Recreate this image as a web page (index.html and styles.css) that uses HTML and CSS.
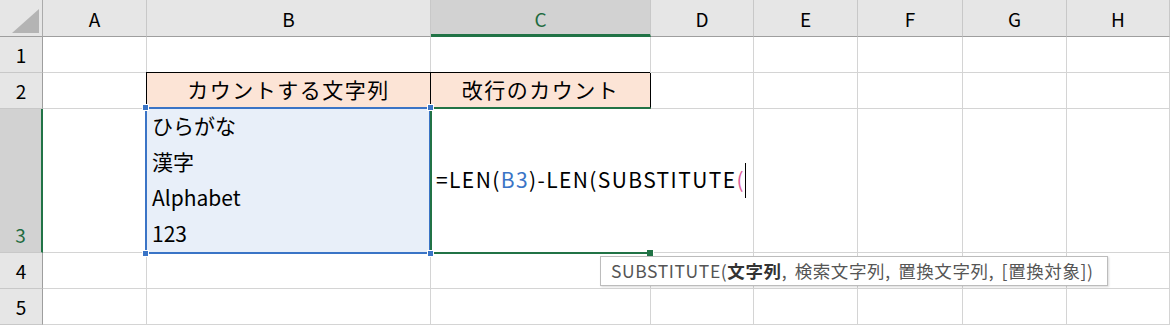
FILE: index.html
```html
<!DOCTYPE html>
<html lang="ja">
<head>
  <meta charset="UTF-8" />
  <title>改行のカウント</title>
  <link rel="stylesheet" href="styles.css">
</head>
<body>
  <div class="sheet">
    <!-- column headers -->
    <div class="corner">
      <svg width="42" height="36" viewBox="0 0 42 36">
        <polygon points="39,9 39,33 12,33" fill="#b4b4b4" />
      </svg>
    </div>
    <div class="col-head">A</div>
    <div class="col-head">B</div>
    <div class="col-head active">C</div>
    <div class="col-head">D</div>
    <div class="col-head">E</div>
    <div class="col-head">F</div>
    <div class="col-head">G</div>
    <div class="col-head">H</div>

    <!-- row 1 -->
    <div class="row-head">1</div>
    <div class="cell"></div>
    <div class="cell"></div>
    <div class="cell"></div>
    <div class="cell"></div>
    <div class="cell"></div>
    <div class="cell"></div>
    <div class="cell"></div>
    <div class="cell"></div>

    <!-- row 2 -->
    <div class="row-head">2</div>
    <div class="cell"></div>
    <div class="cell title">カウントする文字列</div>
    <div class="cell title">改行のカウント</div>
    <div class="cell"></div>
    <div class="cell"></div>
    <div class="cell"></div>
    <div class="cell"></div>
    <div class="cell"></div>

    <!-- row 3 -->
    <div class="row-head active">3</div>
    <div class="cell"></div>
    <div class="cell range">
      <div class="lines">
        <div>ひらがな</div>
        <div>漢字</div>
        <div>Alphabet</div>
        <div>123</div>
      </div>
      <span class="handle tl"></span>
      <span class="handle tr"></span>
      <span class="handle bl"></span>
      <span class="handle br"></span>
    </div>
    <div class="cell editing">
      <span class="formula">=LEN(<span class="ref">B3</span>)-LEN(SUBSTITUTE<span class="paren">(</span></span><span class="caret"></span>
      <span class="fill-handle"></span>
    </div>
    <div class="cell"></div>
    <div class="cell"></div>
    <div class="cell"></div>
    <div class="cell"></div>
    <div class="cell"></div>

    <!-- row 4 -->
    <div class="row-head">4</div>
    <div class="cell"></div>
    <div class="cell"></div>
    <div class="cell"></div>
    <div class="cell"></div>
    <div class="cell"></div>
    <div class="cell"></div>
    <div class="cell"></div>
    <div class="cell"></div>

    <!-- row 5 -->
    <div class="row-head">5</div>
    <div class="cell"></div>
    <div class="cell"></div>
    <div class="cell"></div>
    <div class="cell"></div>
    <div class="cell"></div>
    <div class="cell"></div>
    <div class="cell"></div>
    <div class="cell"></div>
  </div>

  <div class="tooltip">SUBSTITUTE(<b>文字列</b>, 検索文字列, 置換文字列, [置換対象])</div>
</body>
</html>
```

FILE: styles.css
```css
body {
  margin: 0;
  padding: 0;
  background: #fff;
  font-family: "Noto Sans CJK JP", "Noto Sans", sans-serif;
  color: #000;
  position: relative;
  overflow: hidden;
}

.sheet {
  display: grid;
  grid-template-columns: 43px 104px 284px 220px 103px 104px 105px 104px 103px;
  grid-template-rows: 37px 36px 36px 144px 36px 36px;
  width: 1170px;
  height: 325px;
}

.corner {
  background: #e6e6e6;
  border-right: 1px solid #ababab;
  border-bottom: 1px solid #9e9e9e;
}

.corner svg {
  display: block;
}

.col-head {
  background: #e6e6e6;
  border-right: 1px solid #c8c8c8;
  border-bottom: 1px solid #9e9e9e;
  display: flex;
  align-items: center;
  justify-content: center;
  font-size: 19px;
  padding-top: 1px;
}

.col-head.active {
  background: #d2d2d2;
  color: #1e6b40;
  border-bottom: 3px solid #217346;
  padding-top: 3px;
}

.row-head {
  background: #e6e6e6;
  border-right: 1px solid #9e9e9e;
  border-bottom: 1px solid #c8c8c8;
  display: flex;
  align-items: center;
  justify-content: center;
  font-size: 19px;
}

.row-head.active {
  background: #d2d2d2;
  color: #1e6b40;
  border-right: 2px solid #217346;
  align-items: flex-end;
  padding-bottom: 4px;
}

.cell {
  border-right: 1px solid #d4d4d4;
  border-bottom: 1px solid #d4d4d4;
  font-size: 21px;
}

.title {
  background: #fce4d6;
  border-right-color: #000;
  box-shadow: -1px -1px 0 #000;
  display: flex;
  align-items: center;
  justify-content: center;
  letter-spacing: 1.5px;
  padding-bottom: 3px;
}

.range {
  background: #e8eff9;
  position: relative;
}

.range::after {
  content: "";
  position: absolute;
  top: -2px;
  left: -2px;
  right: -1px;
  bottom: -2px;
  border: 2px solid #3a74c6;
}

.lines {
  padding-left: 5px;
  line-height: 36px;
  margin-top: -2px;
}

.handle {
  position: absolute;
  width: 5px;
  height: 5px;
  background: #3a74c6;
  border: 1px solid #fff;
  z-index: 2;
}

.handle.tl { top: -5px; left: -5px; }
.handle.tr { top: -5px; right: -4px; }
.handle.bl { bottom: -5px; left: -5px; }
.handle.br { bottom: -5px; right: -4px; }

.editing {
  position: relative;
  z-index: 1;
  border-right-color: transparent;
  display: flex;
  align-items: center;
  padding-left: 4px;
  padding-bottom: 4px;
  white-space: nowrap;
  border-top: 2px solid #217346;
  border-left: 2px solid #217346;
  border-bottom: 2px solid #217346;
  margin-top: -2px;
  margin-left: -1px;
  margin-bottom: -1px;
}

.formula {
  flex-shrink: 0;
  letter-spacing: 1.4px;
}

.ref {
  color: #3a74c6;
}

.paren {
  color: #e0609a;
}

.caret {
  flex-shrink: 0;
  display: inline-block;
  width: 1.5px;
  height: 35px;
  background: #000;
  margin-top: 3px;
}

.fill-handle {
  position: absolute;
  right: -4px;
  bottom: -5px;
  width: 6px;
  height: 6px;
  background: #217346;
  border: 1px solid #fff;
  border-left: none;
  border-top: none;
}

.tooltip {
  position: absolute;
  left: 600px;
  top: 256px;
  width: 496px;
  height: 28px;
  padding-left: 10px;
  background: #fff;
  border: 1px solid #bcbcbc;
  box-shadow: 1px 1px 2px rgba(0, 0, 0, 0.15);
  color: #555;
  font-size: 17.5px;
  letter-spacing: 0.6px;
  word-spacing: 3px;
  line-height: 28px;
  white-space: nowrap;
  z-index: 3;
}

.tooltip b {
  color: #333;
}
```
